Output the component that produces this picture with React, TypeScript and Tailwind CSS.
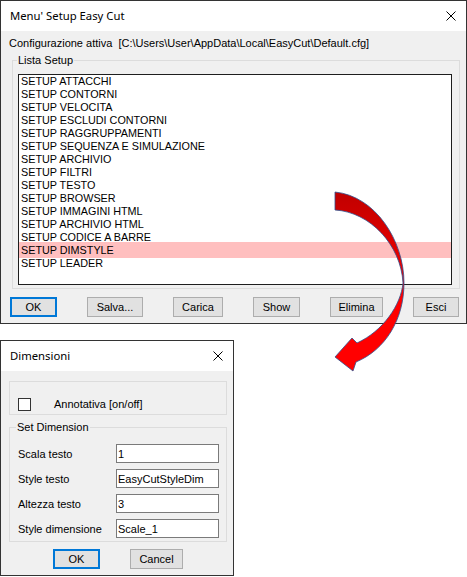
import clsx from 'clsx';

const setupItems = [
  'SETUP ATTACCHI',
  'SETUP CONTORNI',
  'SETUP VELOCITA',
  'SETUP ESCLUDI CONTORNI',
  'SETUP RAGGRUPPAMENTI',
  'SETUP SEQUENZA E SIMULAZIONE',
  'SETUP ARCHIVIO',
  'SETUP FILTRI',
  'SETUP TESTO',
  'SETUP BROWSER',
  'SETUP IMMAGINI HTML',
  'SETUP ARCHIVIO HTML',
  'SETUP CODICE A BARRE',
  'SETUP DIMSTYLE',
  'SETUP LEADER',
];

const configPath = 'Configurazione attiva  [C:\\Users\\User\\AppData\\Local\\EasyCut\\Default.cfg]';

const dimFields = [
  { label: 'Scala testo', value: '1' },
  { label: 'Style testo', value: 'EasyCutStyleDim' },
  { label: 'Altezza testo', value: '3' },
  { label: 'Style dimensione', value: 'Scale_1' },
];

function CloseIcon() {
  return (
    <svg width="10" height="10" viewBox="0 0 10 10" className="block">
      <path d="M0.5 0.5 L9.5 9.5 M9.5 0.5 L0.5 9.5" stroke="#000" strokeWidth="1" fill="none" />
    </svg>
  );
}

function TitleBar({ title }: { title: string }) {
  return (
    <div className="flex h-[30px] items-center justify-between bg-white pl-[9px] pr-[10px]">
      <span className="font-['Noto_Sans',sans-serif] text-[11.3px] leading-none text-black">{title}</span>
      <CloseIcon />
    </div>
  );
}

function WinButton({
  label,
  className,
  focused,
}: {
  label: string;
  className: string;
  focused?: boolean;
}) {
  return (
    <button
      type="button"
      className={clsx(
        'flex h-[20px] items-center justify-center bg-[#e1e1e1] text-[11px] leading-none text-black',
        focused ? 'border-2 border-[#0078d7]' : 'border border-[#adadad]',
        className,
      )}
    >
      {label}
    </button>
  );
}

function SetupDialog() {
  return (
    <div className="flex h-[324px] w-[467px] flex-col border border-[#333] bg-[#f0f0f0]">
      <TitleBar title="Menu' Setup Easy Cut" />
      <div className="mt-[5px] whitespace-pre pl-[8px] leading-[14px]">{configPath}</div>

      <div className="relative ml-[11px] mt-[10px] h-[229px] w-[448px] border border-[#dcdcdc] pl-[5px] pt-[13px]">
        <span className="absolute -top-[8px] left-[4px] bg-[#f0f0f0] px-[1px] leading-[14px]">Lista Setup</span>
        <div className="h-[211px] w-[434px] border border-[#1e1e1e] bg-white text-[10.8px]">
          {setupItems.map((item) => (
            <div key={item} className="relative h-[13px] pl-[2px] leading-[13px]">
              {item === 'SETUP DIMSTYLE' && (
                <span className="absolute inset-x-0 -top-[2px] -bottom-px bg-[#ffbfbf]" />
              )}
              <span className="relative">{item}</span>
            </div>
          ))}
        </div>
      </div>

      <div className="mt-[8px] flex gap-[30px] pl-[9px]">
        <WinButton label="OK" className="w-[47px]" focused />
        <WinButton label="Salva..." className="w-[56px]" />
        <WinButton label="Carica" className="w-[50px]" />
        <WinButton label="Show" className="w-[47px]" />
        <WinButton label="Elimina" className="w-[53px]" />
        <WinButton label="Esci" className="w-[46px]" />
      </div>
    </div>
  );
}

function DimensionDialog() {
  return (
    <div className="mt-[16px] flex h-[236px] w-[234px] flex-col border border-[#333] bg-[#f0f0f0]">
      <TitleBar title="Dimensioni" />

      <div className="ml-[8px] mt-[10px] h-[34px] w-[218px] border border-[#dcdcdc] pl-[8px] pt-[15px]">
        <div className="flex items-center">
          <span className="h-[13px] w-[13px] border border-[#333] bg-white" />
          <span className="ml-[23px] leading-[14px]">Annotativa [on/off]</span>
        </div>
      </div>

      <div className="relative ml-[8px] mt-[12px] h-[115px] w-[218px] border border-[#dcdcdc] pl-[8px] pt-[16px]">
        <span className="absolute -top-[8px] left-[6px] bg-[#f0f0f0] px-[1px] leading-[14px]">Set Dimension</span>
        <div className="flex flex-col gap-[6px]">
          {dimFields.map((f) => (
            <div key={f.label} className="flex items-center">
              <span className="w-[98px] leading-[14px]">{f.label}</span>
              <input
                readOnly
                value={f.value}
                className="h-[19px] w-[103px] border border-[#7a7a7a] bg-white pl-[1px] text-[11px] text-black outline-none"
              />
            </div>
          ))}
        </div>
      </div>

      <div className="mt-[7px] flex gap-[30px] pl-[52px]">
        <WinButton label="OK" className="w-[47px]" focused />
        <WinButton label="Cancel" className="w-[53px]" />
      </div>
    </div>
  );
}

function CurvedArrow() {
  return (
    <svg
      className="pointer-events-none absolute inset-0"
      width="467"
      height="577"
      viewBox="0 0 467 577"
    >
      <defs>
        <linearGradient id="arrowFill" x1="0" y1="192" x2="0" y2="300" gradientUnits="userSpaceOnUse">
          <stop offset="0" stopColor="#c00000" />
          <stop offset="1" stopColor="#ff0000" />
        </linearGradient>
      </defs>
      <path
        d="M335 192 C375 196 404 240 404 283 C404 320 385 350 356 362 L353 371 L335 357 L352 338 L357 343 C383 331 401 305 403 283 C401 245 370 212 335 210 Z"
        fill="url(#arrowFill)"
        stroke="#2f528f"
        strokeWidth="0.8"
      />
    </svg>
  );
}

export default function App() {
  return (
    <div className="relative h-[577px] w-[467px] bg-white font-['Liberation_Sans',Arial,sans-serif] text-[11px] text-black">
      <SetupDialog />
      <DimensionDialog />
      <CurvedArrow />
    </div>
  );
}
